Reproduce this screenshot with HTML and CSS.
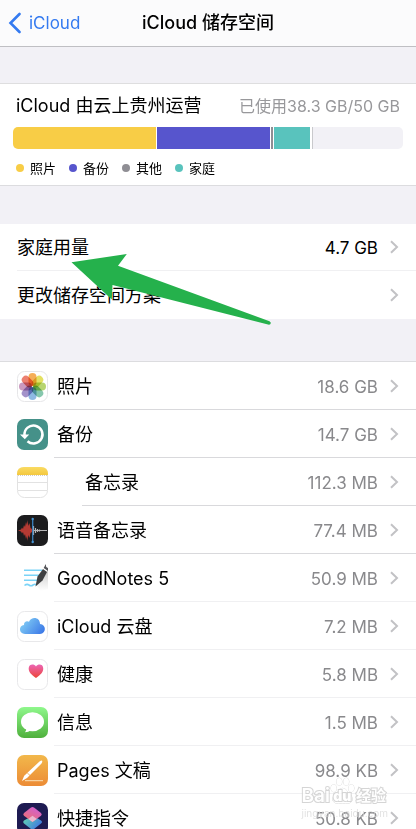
FILE: index.html
```html
<!DOCTYPE html>
<html lang="zh">
<head>
    <meta charset="UTF-8">
    <meta name="viewport" content="width=device-width, initial-scale=1.0">
    <title>iCloud 储存空间</title>
    <link rel="stylesheet" href="styles.css">
</head>
<body>
    <svg class="defs" width="0" height="0" aria-hidden="true">
        <symbol id="chevron" viewBox="0 0 10 16">
            <path d="M2 2.2 L8 8 L2 13.8" fill="none" stroke="#c2c2c5" stroke-width="2"/>
        </symbol>
    </svg>
    <div class="screen">
        <header class="navbar">
            <a class="back" href="#">
                <svg width="13" height="22" viewBox="0 0 13 22"><path d="M11.5 2 L2.5 11 L11.5 20" fill="none" stroke="#347af0" stroke-width="2.6" stroke-linecap="round"/></svg>
                iCloud
            </a>
            <h1>iCloud 储存空间</h1>
        </header>

        <main>
            <section class="usage">
                <div class="usage-head">
                    <h2>iCloud 由云上贵州运营</h2>
                    <span class="used">已使用38.3 GB/50 GB</span>
                </div>
                <div class="bar">
                    <span class="photos" style="width: 36.6%"></span>
                    <span class="backup" style="width: 29%"></span>
                    <span class="other" style="width: 0.5%"></span>
                    <span class="family" style="width: 9.2%"></span>
                    <span class="end"></span>
                </div>
                <ul class="legend">
                    <li><i class="photos"></i>照片</li>
                    <li><i class="backup"></i>备份</li>
                    <li><i class="other"></i>其他</li>
                    <li><i class="family"></i>家庭</li>
                </ul>
            </section>

            <section class="plan">
                <ul class="rows">
                    <li><a href="#"><span class="name">家庭用量</span><span class="size">4.7 GB</span><svg class="chevron"><use href="#chevron"/></svg></a></li>
                    <li><a href="#"><span class="name">更改储存空间方案</span><svg class="chevron"><use href="#chevron"/></svg></a></li>
                </ul>
                <svg class="arrow" width="202" height="74" viewBox="70 252 202 74" aria-hidden="true">
                    <path d="M71.5 262.2 L126.8 254 L118 265.8 L269.5 321.2 Q271.5 322.5 270.5 324 Q269.5 325 268 324.5 L112.5 285 L111.8 299.5 Z" fill="#25b14c"/>
                </svg>
            </section>

            <ul class="rows apps">
                <li>
                    <svg class="icon" viewBox="0 0 31 31">
                        <rect x=".5" y=".5" width="30" height="30" rx="7" fill="#fff" stroke="#e6e6e8"/>
                        <g class="petals">
                            <rect x="11.5" y="2" width="8" height="13" rx="4" fill="#f39a2d"/>
                            <rect x="11.5" y="2" width="8" height="13" rx="4" fill="#dcd93a" transform="rotate(45 15.5 15.5)"/>
                            <rect x="11.5" y="2" width="8" height="13" rx="4" fill="#a5ca4b" transform="rotate(90 15.5 15.5)"/>
                            <rect x="11.5" y="2" width="8" height="13" rx="4" fill="#68b999" transform="rotate(135 15.5 15.5)"/>
                            <rect x="11.5" y="2" width="8" height="13" rx="4" fill="#72a8dc" transform="rotate(180 15.5 15.5)"/>
                            <rect x="11.5" y="2" width="8" height="13" rx="4" fill="#8c77bd" transform="rotate(225 15.5 15.5)"/>
                            <rect x="11.5" y="2" width="8" height="13" rx="4" fill="#bd7faf" transform="rotate(270 15.5 15.5)"/>
                            <rect x="11.5" y="2" width="8" height="13" rx="4" fill="#e8604c" transform="rotate(315 15.5 15.5)"/>
                        </g>
                    </svg>
                    <a href="#"><span class="name">照片</span><span class="size">18.6 GB</span><svg class="chevron"><use href="#chevron"/></svg></a>
                </li>
                <li>
                    <svg class="icon" viewBox="0 0 31 31">
                        <rect width="31" height="31" rx="7" fill="#459189"/>
                        <path d="M7.5 16 A9 9 0 1 1 10.5 22.2" fill="none" stroke="#fff" stroke-width="2.5"/>
                        <path d="M3 15.5 L12.2 15.5 L7.8 20.3 Z" fill="#fff"/>
                    </svg>
                    <a href="#"><span class="name">备份</span><span class="size">14.7 GB</span><svg class="chevron"><use href="#chevron"/></svg></a>
                </li>
                <li class="indent">
                    <svg class="icon" viewBox="0 0 31 31">
                        <defs><linearGradient id="notes" x2="0" y2="1"><stop stop-color="#fadb62"/><stop offset="1" stop-color="#f4c83f"/></linearGradient></defs>
                        <rect x=".5" y=".5" width="30" height="30" rx="7" fill="#fff" stroke="#e2e2e2"/>
                        <path d="M0 8 V7 Q0 0 7 0 H24 Q31 0 31 7 V8 Z" fill="url(#notes)"/>
                        <path d="M1 8.5 H30" stroke="#d0cdc4" stroke-dasharray="1 1"/>
                        <path d="M1 15.5 H30 M1 23.5 H30" stroke="#e2e2e2"/>
                    </svg>
                    <a href="#"><span class="name">备忘录</span><span class="size">112.3 MB</span><svg class="chevron"><use href="#chevron"/></svg></a>
                </li>
                <li>
                    <svg class="icon" viewBox="0 0 31 31">
                        <rect width="31" height="31" rx="7" fill="#1c1c1e"/>
                        <path d="M1 15.5 L4 14.5 L5 12.5 L6 14 L7 10 L8 12 L9 7 L10 10 L10.5 5 L11.5 11 L12.5 8 L13.5 13 L15 14 V17 L13.5 18 L12.5 23 L11.5 20 L10.5 26 L10 21 L9 24 L8 19 L7 21 L6 17 L5 18.5 L4 16.5 Z" fill="#b53a33"/>
                        <path d="M16.5 11 V20 M18.5 13 V18 M20.5 14 V17 M22.5 14.5 V16.5 M16 15.5 H30" stroke="#b5b5b7" stroke-width="1.2"/>
                        <path d="M15.7 4 V27" stroke="#3b82bd" stroke-width="1.3"/>
                        <circle cx="15.7" cy="4" r="1.2" fill="#4594d4"/>
                        <circle cx="15.7" cy="27" r="1.2" fill="#4594d4"/>
                    </svg>
                    <a href="#"><span class="name">语音备忘录</span><span class="size">77.4 MB</span><svg class="chevron"><use href="#chevron"/></svg></a>
                </li>
                <li>
                    <svg class="icon" viewBox="0 0 31 31">
                        <defs><linearGradient id="shade" x2="0" y2="1"><stop stop-color="#ccc"/><stop offset="1" stop-color="#fff"/></linearGradient></defs>
                        <path d="M31 7 V26 L24 28 L19 22 Z" fill="url(#shade)"/>
                        <path d="M7 7.2 H25 M7 12.2 H23 M7 17.2 H21" stroke="#7bd3f7" stroke-width="1.6"/>
                        <path d="M7.5 22.5 Q10 20.5 12 22 T16 22 T19.5 22" fill="none" stroke="#7bd3f7" stroke-width="1.6"/>
                        <path d="M18.5 23.5 L20.5 13.5 L26 6 L30 9 L25.5 17.5 Z" fill="#3f4042"/>
                        <path d="M26.7 5 L28.8 1 L29.2 4 L31 5 V8 Z" fill="#55565a"/>
                    </svg>
                    <a href="#"><span class="name">GoodNotes 5</span><span class="size">50.9 MB</span><svg class="chevron"><use href="#chevron"/></svg></a>
                </li>
                <li>
                    <svg class="icon" viewBox="0 0 31 31">
                        <defs><linearGradient id="cloud" y1=".3" x2="1" y2=".8"><stop stop-color="#83cff5"/><stop offset="1" stop-color="#3b78e7"/></linearGradient></defs>
                        <rect x=".5" y=".5" width="30" height="30" rx="7" fill="#fff" stroke="#e8e8ea"/>
                        <path d="M8 23 C1.5 22.8 1.5 14.5 7 14 C6.8 10.5 10 9.5 12 10.8 C14.5 5 23 6 23 13 C29.5 13.5 29.5 22.5 23 23 Z" fill="url(#cloud)"/>
                    </svg>
                    <a href="#"><span class="name">iCloud 云盘</span><span class="size">7.2 MB</span><svg class="chevron"><use href="#chevron"/></svg></a>
                </li>
                <li>
                    <svg class="icon" viewBox="0 0 31 31">
                        <defs><linearGradient id="heart" x2="0" y2="1"><stop stop-color="#ec65b4"/><stop offset="1" stop-color="#ec4437"/></linearGradient></defs>
                        <rect x=".5" y=".5" width="30" height="30" rx="7" fill="#fff" stroke="#e8e8ea"/>
                        <path d="M19 19 C14 15.5 11.5 13 11.7 9 C12 5 17 4.5 19 7.5 C21 4.5 26 5 26.2 9 C26.5 13 24 15.5 19 19 Z" fill="url(#heart)"/>
                    </svg>
                    <a href="#"><span class="name">健康</span><span class="size">5.8 MB</span><svg class="chevron"><use href="#chevron"/></svg></a>
                </li>
                <li>
                    <svg class="icon" viewBox="0 0 31 31">
                        <defs><linearGradient id="msg" x2="0" y2="1"><stop stop-color="#8ff88c"/><stop offset="1" stop-color="#4fb03c"/></linearGradient></defs>
                        <rect width="31" height="31" rx="7" fill="url(#msg)"/>
                        <ellipse cx="15.5" cy="14.8" rx="11.5" ry="9.5" fill="#fff"/>
                        <path d="M9 21 Q10 23.5 8 25.3 Q11.5 25.3 14 23 Z" fill="#fff"/>
                    </svg>
                    <a href="#"><span class="name">信息</span><span class="size">1.5 MB</span><svg class="chevron"><use href="#chevron"/></svg></a>
                </li>
                <li>
                    <svg class="icon" viewBox="0 0 31 31">
                        <defs><linearGradient id="pages" x2="0" y2="1"><stop stop-color="#f2b84b"/><stop offset="1" stop-color="#ec8b35"/></linearGradient></defs>
                        <rect width="31" height="31" rx="7" fill="url(#pages)"/>
                        <path d="M5 26 L7.2 20.8 L22.5 6.5 Q25 4.8 25.2 6 Q25.5 7 24.5 8.5 L10 23 Z" fill="#fff"/>
                        <path d="M10.2 17.9 L13 20.4" stroke="#efa242" stroke-width=".8"/>
                        <path d="M8 25.7 H26" stroke="#fbe0b8" stroke-width="1"/>
                    </svg>
                    <a href="#"><span class="name">Pages 文稿</span><span class="size">98.9 KB</span><svg class="chevron"><use href="#chevron"/></svg></a>
                </li>
                <li>
                    <svg class="icon" viewBox="0 0 31 31">
                        <defs>
                            <linearGradient id="sc1" x1=".8" x2=".2" y2="1"><stop stop-color="#cf5fd8"/><stop offset="1" stop-color="#f0716a"/></linearGradient>
                            <linearGradient id="sc2" x2="1" y2=".6"><stop stop-color="#65dcae"/><stop offset="1" stop-color="#3f78e0"/></linearGradient>
                        </defs>
                        <rect width="31" height="31" rx="7" fill="#1e1b52"/>
                        <path d="M16 12.5 L24 17.5 Q26 19 24 20.5 L17 26 Q15.5 27 14 26 L7 20.5 Q5.5 19 7 17.5 Z" fill="url(#sc2)"/>
                        <path d="M14 4.5 Q15.5 3.5 17 4.5 L24 10 Q25.5 11.5 24 12.8 L15.5 19 L7 12.8 Q5.5 11.5 7 10 Z" fill="url(#sc1)"/>
                        <path d="M15.5 12.8 L19.8 16 L15.5 19 L11.2 16 Z" fill="#eed5ea" opacity=".7"/>
                    </svg>
                    <a href="#"><span class="name">快捷指令</span><span class="size">50.8 KB</span><svg class="chevron"><use href="#chevron"/></svg></a>
                </li>
            </ul>
        </main>

        <div class="watermark">
            <div class="mark">
                <span>Bai</span>
                <span class="paw">
                    <svg width="25" height="30" viewBox="0 0 27 30" aria-hidden="true">
                        <g fill="#fff" stroke="#c8c8c8">
                            <ellipse cx="4" cy="12" rx="3" ry="4"/>
                            <ellipse cx="10" cy="5" rx="3" ry="4"/>
                            <ellipse cx="17.5" cy="5" rx="3" ry="4"/>
                            <ellipse cx="23" cy="12" rx="3" ry="4"/>
                            <path d="M13.5 12 Q17 12 19 16 L23 20 Q26 26 21 28 Q17 29 13.5 28 Q9 29 6 28 Q1 26 4 20 L8 16 Q10 12 13.5 12 Z"/>
                        </g>
                    </svg>
                    <b>du</b>
                </span>
                <span class="cn">经验</span>
            </div>
            <div class="site">jingyan.baidu.com</div>
        </div>
    </div>
</body>
</html>
```

FILE: styles.css
```css
* {
    box-sizing: border-box;
}
body {
    margin: 0;
    font-family: Inter, "Noto Sans CJK SC", sans-serif;
    font-size: 18px;
    line-height: 24px;
    color: #000;
    background-color: #f2f1f6;
}
h1, h2, ul {
    margin: 0;
    padding: 0;
}
ul {
    list-style: none;
}
a {
    color: inherit;
    text-decoration: none;
}
.defs {
    position: absolute;
}
.screen {
    position: relative;
    height: 100vh;
    overflow: hidden;
}
.navbar {
    display: grid;
    grid-template-columns: 1fr auto 1fr;
    align-items: center;
    height: 47px;
    padding: 0 8px;
    background-color: #fbfbfc;
    border-bottom: 1px solid #bfbfc3;
}
.navbar h1 {
    font-size: 18px;
    font-weight: 500;
}
.back {
    display: flex;
    align-items: center;
    gap: 8px;
    font-size: 17px;
    color: #347af0;
}
.usage {
    margin-top: 36px;
    padding: 10px 13px 6px;
    background-color: #fff;
    border-top: 1px solid #dededf;
    border-bottom: 1px solid #dcdcdf;
}
.usage-head {
    display: flex;
    justify-content: space-between;
    align-items: center;
    padding: 0 3px;
}
.usage-head h2 {
    font-size: 18px;
    font-weight: 400;
}
.used {
    font-size: 16px;
    color: #98989b;
}
.bar {
    display: flex;
    gap: 1px;
    height: 22px;
    margin-top: 9px;
    overflow: hidden;
    border-radius: 5px;
    background-color: #fff;
}
.photos {
    background-color: #f8cd46;
}
.backup {
    background-color: #5755cd;
}
.other {
    background-color: #8f8e94;
}
.family {
    background-color: #59c3bd;
}
.bar .end {
    flex: 1;
    margin-left: 1px;
    background-color: #f2f1f6;
    border-left: 1px solid #c9c9cc;
}
.legend {
    display: flex;
    gap: 13px;
    margin-top: 8px;
    padding-left: 3px;
    font-size: 13px;
    line-height: 22px;
}
.legend li {
    display: flex;
    align-items: center;
    gap: 6px;
}
.legend i {
    width: 8px;
    height: 8px;
    border-radius: 50%;
}
.plan {
    position: relative;
    margin: 38px 0 42px;
}
.rows {
    background-color: #fff;
}
.rows li {
    display: flex;
    align-items: center;
    gap: 6px;
    height: 48px;
    padding-left: 17px;
}
.plan .rows li:first-child {
    height: 47px;
}
.rows a {
    display: flex;
    flex: 1;
    align-items: center;
    height: 100%;
    border-bottom: 1px solid #f0f0f2;
}
.rows li:last-child a {
    border-bottom: none;
}
.name, .size {
    padding-top: 2px;
}
.name {
    flex: 1;
}
.size {
    font-size: 17px;
}
.chevron {
    width: 10px;
    height: 16px;
    margin: 0 17px 0 11px;
}
.arrow {
    position: absolute;
    left: 70px;
    top: 28px;
}
.apps {
    border-top: 1px solid #dcdcdf;
}
.apps a {
    padding-left: 3px;
}
.apps li:nth-child(-n+4) a {
    border-bottom-color: #d9d9dc;
}
.apps .size {
    color: #89898c;
}
.apps .indent a {
    margin-left: 28px;
}
.icon {
    width: 31px;
    height: 31px;
}
.petals rect {
    mix-blend-mode: multiply;
    opacity: 0.8;
}
.watermark {
    position: absolute;
    right: 28px;
    bottom: 9px;
    opacity: 0.75;
    color: #fff;
    pointer-events: none;
}
.mark {
    display: flex;
    align-items: flex-end;
    font-size: 19px;
    line-height: 20px;
    font-weight: 600;
    -webkit-text-stroke: 2px #c8c8c8;
    paint-order: stroke fill;
}
.paw {
    display: grid;
    place-items: end center;
}
.paw svg, .paw b {
    grid-area: 1 / 1;
}
.paw b {
    font-size: 14px;
}
.mark .cn {
    margin-left: 1px;
    font-size: 15px;
}
.site {
    font-size: 10px;
    line-height: 14px;
    color: #d8d8d8;
}
```
